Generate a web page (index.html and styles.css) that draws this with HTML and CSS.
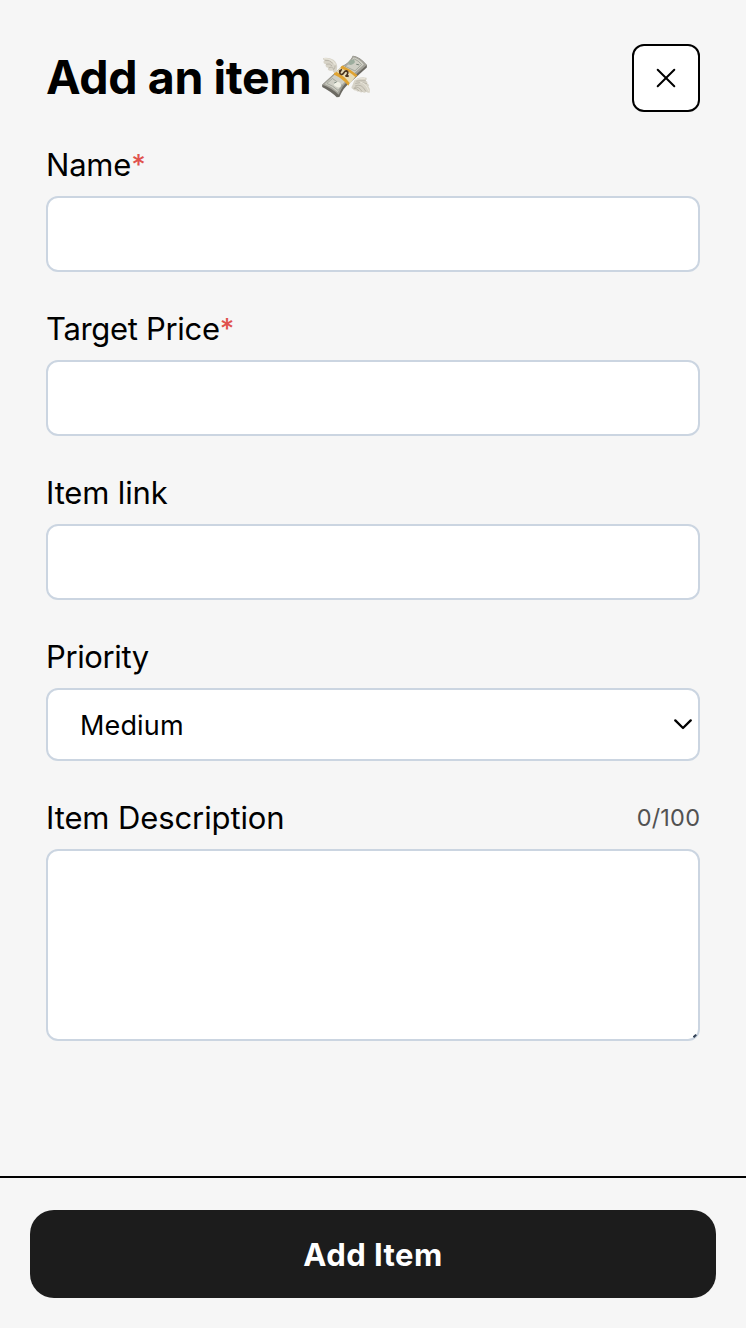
FILE: index.html
```html
<!DOCTYPE html>
<html lang="en">
<head>
<meta charset="utf-8">
<title>Add an item</title>
<link rel="stylesheet" href="styles.css">
</head>
<body>
<form class="sheet">
  <main class="content">
    <header class="header">
      <h1 class="title"><span class="title-text">Add an item</span>
        <svg class="money" viewBox="34 24 150 136" aria-hidden="true">
          <path d="M37 117 98 61Q121 50 130 29Q151 32 172 57V65L120 112Q102 125 89 154L81 155Q64 138 37 124Z" fill="#6b6962"/>
          <path d="M37 117 98 60Q120 49 130 29Q151 32 172 57L116 106Q98 118 87 147Q65 127 37 117Z" fill="#a3a299"/>
          <path d="M45 115 98 65Q121 52 132 34Q149 38 163 56L112 101Q95 116 84 139Q65 122 45 115Z" fill="#cfcfc5"/>
          <path d="M51 113 68 98 100 121Q91 126 85 134Q69 119 51 113ZM106 61Q126 51 134 39Q147 44 156 56L136 75Z" fill="none" stroke="#8e9388" stroke-width="2"/>
          <ellipse cx="126" cy="49" rx="10" ry="7" fill="#9cad9e" transform="rotate(-25 126 49)"/>
          <ellipse cx="83" cy="116" rx="11" ry="8" fill="#eeeee3" transform="rotate(25 83 116)"/>
          <path d="M73 112 81 108M140 55 149 57" stroke="#78847a" stroke-width="3"/>
          <path d="M73 84 96 62 139 91 117 118Q99 96 73 84Z" fill="#e7dcb8"/>
          <path d="M74 80 78 77Q105 91 120 112L116 120Q99 98 72 86ZM93 63 98 59Q125 72 144 88L138 94Q119 76 93 68Z" fill="#e0a331"/>
          <path d="M97 71C88 74 88 84 95 86C102 87 103 74 110 75C117 77 115 88 107 91M88 74 94 78M110 87 117 92" fill="none" stroke="#4b3520" stroke-width="5"/>
          <path d="M82 66Q84 51 71 41Q57 33 40 36Q37 40 44 44Q38 47 42 52Q45 55 49 56Q44 60 50 64L56 66Q51 70 58 74Q64 76 69 73Q68 80 77 81Q82 76 82 66Z" fill="#d7d3c7"/>
          <path d="M45 43Q60 41 69 52M49 55Q59 51 67 60M57 66Q64 60 72 68M70 73Q77 68 76 59" fill="none" stroke="#aaa69a" stroke-width="2"/>
          <path d="M43 38Q65 37 77 56" fill="none" stroke="#e8e5da" stroke-width="4"/>
          <path d="M134 104Q145 94 160 94L171 96Q174 101 168 105Q176 107 173 114Q181 116 177 122Q183 128 181 140Q176 143 170 138Q165 144 159 139Q153 142 150 137Q143 139 140 134Q132 136 130 130Q122 127 128 119Z" fill="#d7d3c7"/>
          <path d="M140 106Q155 104 169 105M137 113Q158 106 173 114M136 121Q156 111 169 137M134 126Q146 119 158 138M132 128Q139 125 149 136" fill="none" stroke="#aaa69a" stroke-width="2"/>
          <path d="M138 102Q151 96 167 98M151 109Q169 110 178 137" fill="none" stroke="#e8e5da" stroke-width="3"/>
        </svg>
      </h1>
      <button class="close" type="button" aria-label="Close">
        <svg viewBox="0 0 20 20"><path d="M1.7 1.7 18.3 18.3M18.3 1.7 1.7 18.3"/></svg>
      </button>
    </header>
    <div class="field">
      <label class="label" for="name"><span class="l-name">Name</span><span class="required">*</span></label>
      <input class="control" id="name">
    </div>
    <div class="field">
      <label class="label" for="price"><span class="l-price">Target Price</span><span class="required">*</span></label>
      <input class="control" id="price">
    </div>
    <div class="field">
      <label class="label" for="link"><span class="l-link">Item link</span></label>
      <input class="control" id="link">
    </div>
    <div class="field">
      <label class="label" for="priority"><span class="l-priority">Priority</span></label>
      <div class="control select">
        <select class="select-input" id="priority"><option>Medium</option></select>
        <svg class="chevron" viewBox="0 0 18 11"><path d="M1.3 1.4 9 9 16.7 1.4"/></svg>
      </div>
    </div>
    <div class="field">
      <div class="label-row">
        <label class="label" for="description"><span class="l-description">Item Description</span></label>
        <span class="counter">0/100</span>
      </div>
      <div class="textarea-wrap">
        <textarea class="control textarea" id="description"></textarea>
        <svg class="grip" viewBox="0 0 4 4"><path d="M.5 3.2 3.2.8"/></svg>
      </div>
    </div>
  </main>
  <footer class="footer"><button class="submit" type="button">Add Item</button></footer>
</form>
</body>
</html>
```
FILE: styles.css
```css
* { box-sizing: border-box; }
body {
  margin: 0;
  background: #f6f6f6;
  color: #000;
  font-family: Inter, "Liberation Sans", sans-serif;
}
.sheet { display: flex; flex-direction: column; height: 1328px; }
.content { flex: 1; display: flex; flex-direction: column; gap: 32px; padding: 44px 46px 0; }
.header { display: flex; justify-content: space-between; align-items: center; height: 68px; margin-bottom: -4px; }
.title { display: flex; align-items: center; gap: 10px; margin: 0; font-size: 46.5px; line-height: 66px; font-weight: 700; white-space: nowrap; }
.title-text { padding-bottom: 2px; letter-spacing: -0.38px; }
.money { width: 50px; height: 45px; margin-top: -4px; }
.close { display: flex; align-items: center; justify-content: center; width: 68px; height: 68px; padding: 0; border: 2px solid #000; border-radius: 12px; background: #fff; }
.close svg { width: 20px; height: 20px; }
.close path, .chevron path { fill: none; stroke: #000; stroke-width: 2; stroke-linecap: round; stroke-linejoin: round; }
.chevron path { stroke-width: 2.3; }
.field { display: flex; flex-direction: column; gap: 8px; }
.label { display: block; height: 48px; font-size: 31px; line-height: 50px; white-space: nowrap; }
.l-name { letter-spacing: -0.2px; }
.l-price { letter-spacing: -0.32px; }
.l-link { letter-spacing: -0.15px; }
.l-priority { letter-spacing: -0.37px; }
.l-description { letter-spacing: -0.11px; }
.required { color: #e0524d; font-size: 28px; font-weight: 500; line-height: 1; vertical-align: 1px; }
.control { display: block; width: 100%; height: 76px; border: 2px solid #cbd5e1; border-radius: 12px; background: #fff; outline: none; }
.select { display: flex; align-items: center; height: 73px; padding: 0 6px 0 32px; }
.select-input { flex: 1; appearance: none; border: 0; padding: 2px 0 0; background: transparent; color: #000; font: 27px/40px Inter, sans-serif; letter-spacing: 0.15px; }
.chevron { width: 18px; height: 11px; }
.label-row { display: flex; justify-content: space-between; align-items: center; height: 48px; }
.counter { color: #525252; font-size: 23.5px; line-height: 48px; padding-top: 2px; letter-spacing: 0.2px; margin-right: -0.2px; }
.textarea-wrap { position: relative; height: 192px; }
.textarea { height: 192px; resize: none; }
.grip { position: absolute; right: 3px; bottom: 3px; width: 4px; height: 4px; }
.grip path { stroke: #334155; stroke-width: 2; }
.footer { height: 152px; padding: 32px 30px 30px; border-top: 2px solid #000; }
.submit { display: block; width: 100%; height: 88px; border: 0; border-radius: 24px; background: #1c1c1c; color: #fff; font: 700 31px/86px Inter, sans-serif; padding: 2px 0 0; letter-spacing: 0.45px; }
```
